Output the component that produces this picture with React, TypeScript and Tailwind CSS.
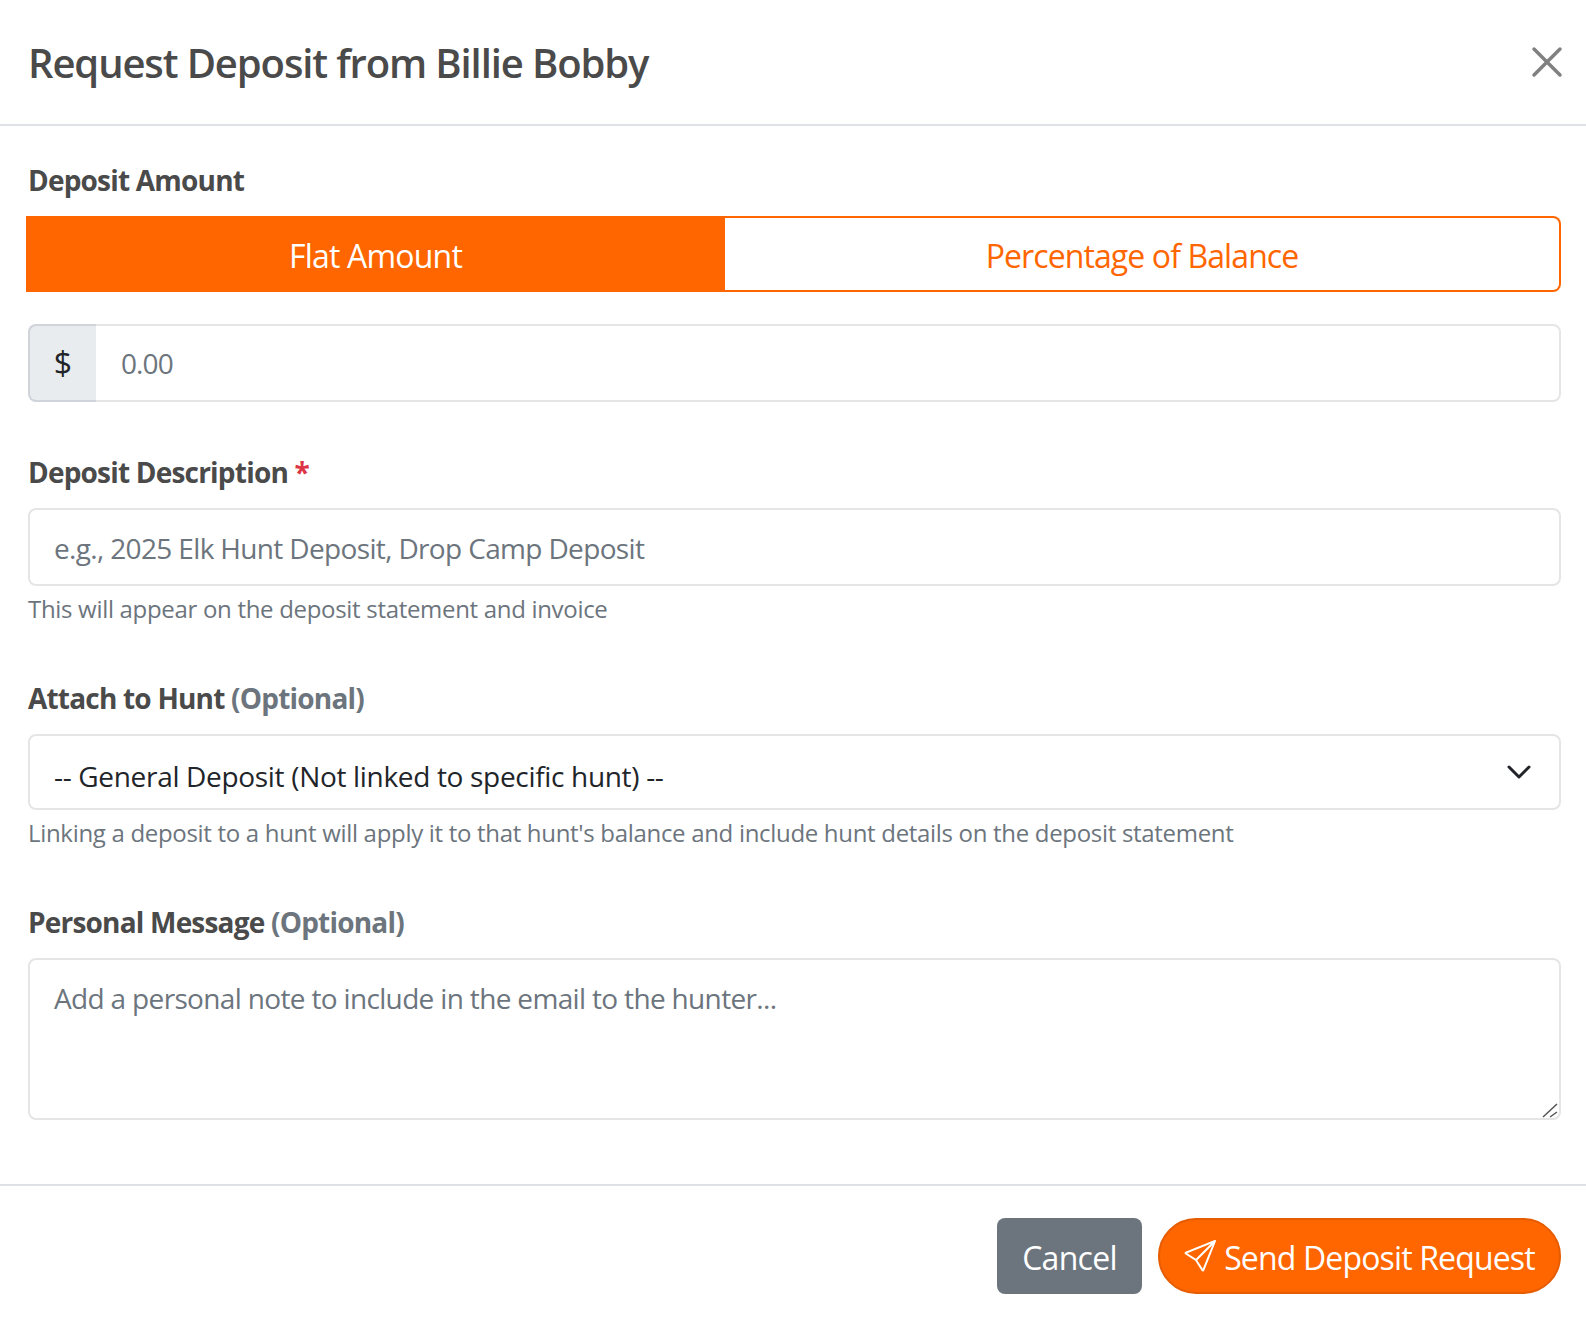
import React from "react";

const labelCls = "block text-[28px] leading-[42px] font-bold text-[#4a4a4a] tracking-[-0.8px]";
const fieldCls = "w-full bg-white border-2 border-[#e5e5e5] rounded-[8px] text-[28px] tracking-[-0.6px] text-[#212529] placeholder:text-[#6c757d] outline-none";
const helpCls = "text-[24px] leading-[39px] text-[#6c757d] tracking-[-0.31px]";

export default function App() {
  return (
    <div className="w-[1586px] h-[1322px] bg-white overflow-hidden flex flex-col" style={{ fontFamily: '"Open Sans", sans-serif' }}>
      <header className="h-[126px] shrink-0 border-b-2 border-[#dee2e6] pl-[28px] pr-[23px] flex items-center justify-between">
        <h1 className="text-[40px] leading-[60px] font-semibold text-[#4a4a4a] tracking-[-1.12px] mt-[2px]">Request Deposit from Billie Bobby</h1>
        <svg width="32" height="32" viewBox="0 0 32 32" className="mb-[1px]" fill="none" stroke="#808080" strokeWidth="3.5" strokeLinecap="round">
          <path d="M3 3 L29 29 M29 3 L3 29" />
        </svg>
      </header>

      <main className="flex-1 pl-[28px] pr-[25px] pt-[33px]">
        <label className={labelCls}>Deposit Amount</label>
        <div className="flex h-[76px] mt-[15px] -ml-[2px]">
          <button className="w-[699px] pt-[3px] bg-[#ff6600] text-white text-[32px] tracking-[-0.8px]">Flat Amount</button>
          <button className="flex-1 pt-[3px] bg-white border-2 border-l-0 border-[#ff6600] rounded-r-[8px] text-[#ff6600] text-[32px] tracking-[-0.9px]">Percentage of Balance</button>
        </div>
        <div className="flex h-[78px] mt-[32px]">
          <span className="w-[68px] shrink-0 flex items-center justify-center bg-[#e9ecef] border-2 border-r-0 border-[#ced4da] rounded-l-[8px] text-[32px] text-[#212529]">$</span>
          <input className={fieldCls + " rounded-l-none border-l-0 px-[25px] !tracking-[-0.9px]"} placeholder="0.00" />
        </div>

        <label className={labelCls + " mt-[49px]"}>Deposit Description <span className="text-[#dc3545]">*</span></label>
        <input className={fieldCls + " h-[78px] mt-[15px] pl-[24px] pr-[24px] pt-[1px] !tracking-[-0.65px]"} placeholder="e.g., 2025 Elk Hunt Deposit, Drop Camp Deposit" />
        <p className={helpCls + " mt-[3px]"}>This will appear on the deposit statement and invoice</p>

        <label className={labelCls + " mt-[49px]"}>Attach to Hunt <span className="text-[#6c757d]">(Optional)</span></label>
        <div className="relative mt-[15px] h-[76px]">
          <select className={fieldCls + " h-full pl-[24px] pr-[24px] pt-[8px] appearance-none !tracking-[-0.32px]"} defaultValue="g">
            <option value="g">-- General Deposit (Not linked to specific hunt) --</option>
          </select>
          <svg className="absolute right-[30px] top-[29px]" width="24" height="18" viewBox="0 0 24 18" fill="none" stroke="#212529" strokeWidth="3" strokeLinecap="round" strokeLinejoin="round">
            <path d="M2 4 L12 14 L22 4" />
          </svg>
        </div>
        <p className={helpCls + " mt-[3px]"}>Linking a deposit to a hunt will apply it to that hunt's balance and include hunt details on the deposit statement</p>

        <label className={labelCls + " mt-[49px]"}>Personal Message <span className="text-[#6c757d]">(Optional)</span></label>
        <div className="relative mt-[15px]">
          <textarea className={fieldCls + " h-[162px] px-[24px] pt-[17px] pb-[14px] block resize-none !tracking-[-0.66px]"} placeholder="Add a personal note to include in the email to the hunter..." />
          <svg className="absolute right-[3px] bottom-[2px] pointer-events-none" width="16" height="16" viewBox="0 0 16 16" fill="none" stroke="#555555" strokeWidth="1.5">
            <path d="M1 15 L15 2 M8 15 L15 10" />
          </svg>
        </div>
      </main>

      <footer className="h-[138px] shrink-0 border-t-2 border-[#dee2e6] pr-[25px] pt-[32px] flex justify-end gap-[16px]">
        <button className="w-[145px] h-[76px] pt-[3px] bg-[#6c757d] rounded-[8px] text-white text-[32px] tracking-[-0.7px]">Cancel</button>
        <button className="w-[403px] h-[76px] bg-[#ff6600] border-2 border-[#e65c00] rounded-full text-white text-[32px] tracking-[-0.85px] flex items-center justify-center gap-[8px]">
          <svg width="32" height="32" viewBox="0 0 16 16" fill="white">
            <path d="M15.854.146a.5.5 0 0 1 .11.54l-5.819 14.547a.75.75 0 0 1-1.329.124l-3.178-4.995L.643 7.184a.75.75 0 0 1 .124-1.33L15.314.037a.5.5 0 0 1 .54.11ZM6.636 10.07l2.761 4.338L14.13 2.576 6.636 10.07Zm6.787-8.201L1.591 6.602l4.339 2.76 7.494-7.493Z" />
          </svg>
          <span className="pt-[3px]">Send Deposit Request</span>
        </button>
      </footer>
    </div>
  );
}
